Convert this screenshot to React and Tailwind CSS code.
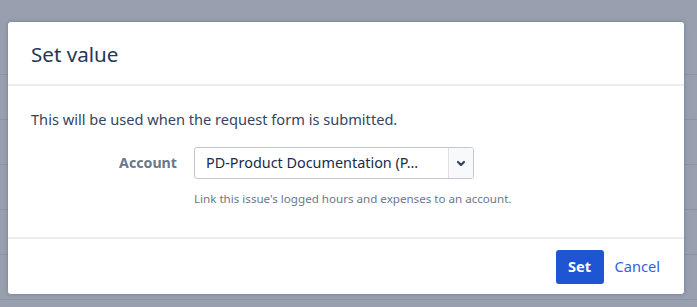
import React from "react";

export default function App() {
  const rows = [0, 1, 2, 3, 4, 5];
  return (
    <div className="relative w-[697px] h-[307px] overflow-hidden bg-[#989fae]" style={{ fontFamily: '"Noto Sans", "Open Sans", sans-serif' }}>
      <div className="flex flex-col pt-[30px]">
        {rows.map((r) => (
          <div key={r} className="h-[45px] border-b border-[#8d93a2]" />
        ))}
      </div>
      <div className="absolute left-[8px] top-[22px] w-[676px] h-[272px] bg-white rounded-[3px] shadow-[0_0_4px_rgba(9,30,66,0.25)] flex flex-col">
        <div className="h-[64px] flex items-center px-[23px] border-b-2 border-[#ebecf0]">
          <h1 className="text-[20.6px] text-[#253858] leading-[24px] pt-[1px]">Set value</h1>
        </div>
        <div className="flex-1 flex flex-col px-[23px] pt-[23px] border-b-2 border-[#ebecf0]">
          <p className="text-[14.6px] leading-[20px] text-[#344563]">This will be used when the request form is submitted.</p>
          <div className="flex items-center mt-[18px]">
            <div className="w-[146px] text-right text-[14.2px] font-bold text-[#6b778c]">Account</div>
            <div className="ml-[17px] w-[280px] h-[32px] flex border border-[#c1c7d0] rounded-[3px] overflow-hidden">
              <div className="flex-1 flex items-center pl-[11px] text-[14.4px] text-[#172b4d]">PD-Product Documentation (P...</div>
              <div className="w-[25px] flex items-center justify-center border-l border-[#dfe1e6] bg-[#f8f9fa]">
                <svg width="10" height="7" viewBox="0 0 10 7">
                  <path d="M2 2 L5 5 L8 2" fill="none" stroke="#344563" strokeWidth="2.2" strokeLinecap="round" strokeLinejoin="round" />
                </svg>
              </div>
            </div>
          </div>
          <p className="ml-[163px] mt-[13px] text-[11.6px] leading-[14px] text-[#6b778c]">Link this issue's logged hours and expenses to an account.</p>
        </div>
        <div className="h-[55px] flex items-center justify-end pr-[24px] gap-[11px] pt-[1px]">
          <button className="w-[48px] h-[34px] rounded-[3px] bg-[#1f55d3] text-white font-bold text-[14.6px]">Set</button>
          <button className="text-[14.6px] text-[#2f65d6]">Cancel</button>
        </div>
      </div>
    </div>
  );
}
